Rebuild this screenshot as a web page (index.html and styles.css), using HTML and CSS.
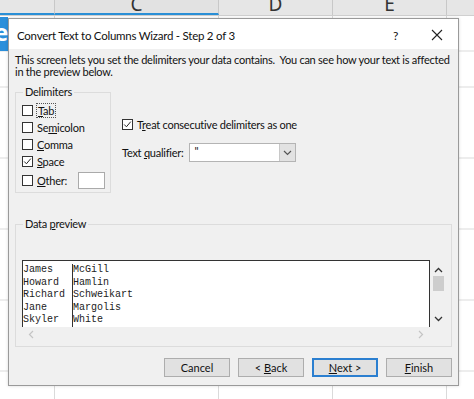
FILE: index.html
```html
<!DOCTYPE html>
<html lang="en">

<head>
    <meta charset="UTF-8">
    <title>Convert Text to Columns Wizard</title>
    <link rel="stylesheet" href="styles.css">
</head>

<body>
    <div class="sheet">
        <div class="col-head">
            <div class="hcell hcell-a"></div>
            <div class="hcell hcell-c selected">C</div>
            <div class="hcell hcell-d">D</div>
            <div class="hcell hcell-e">E</div>
            <div class="hcell hcell-f"></div>
        </div>
        <div class="cells">
            <div class="cell-col cell-a"><div class="tab-blue">e</div></div>
            <div class="cell-col cell-c"></div>
            <div class="cell-col cell-d"></div>
            <div class="cell-col cell-e"></div>
            <div class="cell-col cell-f"></div>
        </div>

        <div class="dialog">
            <div class="titlebar">
                <span class="title">Convert Text to Columns Wizard - Step 2 of 3</span>
                <span class="help">?</span>
                <svg class="close" width="12" height="12" viewBox="0 0 12 12">
                    <path d="M1 1 L11 11 M11 1 L1 11" stroke="#222" stroke-width="1.1" fill="none" />
                </svg>
            </div>

            <div class="body">
                <p class="intro">This screen lets you set the delimiters your data contains.&nbsp; You can see how your text is affected in the preview below.</p>

                <div class="options">
                    <fieldset class="group delimiters">
                        <legend>Delimiters</legend>
                        <label class="check"><span class="box"></span><span class="focus"><u>T</u>ab</span></label>
                        <label class="check"><span class="box"></span><span>Se<u>m</u>icolon</span></label>
                        <label class="check"><span class="box"></span><span><u>C</u>omma</span></label>
                        <label class="check"><span class="box checked"><svg width="11" height="11" viewBox="0 0 11 11"><path d="M1.5 5.5 L4.2 8.3 L9.5 2" stroke="#222" stroke-width="1.2" fill="none" /></svg></span><span><u>S</u>pace</span></label>
                        <label class="check other"><span class="box"></span><span><u>O</u>ther:</span><span class="other-input"></span></label>
                    </fieldset>

                    <div class="side">
                        <label class="check"><span class="box checked"><svg width="11" height="11" viewBox="0 0 11 11"><path d="M1.5 5.5 L4.2 8.3 L9.5 2" stroke="#222" stroke-width="1.2" fill="none" /></svg></span><span>T<u>r</u>eat consecutive delimiters as one</span></label>
                        <div class="qualifier">
                            <span>Text <u>q</u>ualifier:</span>
                            <div class="combo">
                                <span class="combo-value">"</span>
                                <span class="combo-btn"><svg width="9" height="6" viewBox="0 0 9 6"><path d="M1 1 L4.5 4.5 L8 1" stroke="#555" stroke-width="1.2" fill="none" /></svg></span>
                            </div>
                        </div>
                    </div>
                </div>

                <fieldset class="group preview-group">
                    <legend>Data <u>p</u>review</legend>
                    <div class="preview">
                        <div class="preview-main">
                            <div class="data">
                                <div class="data-col first">James<br>Howard<br>Richard<br>Jane<br>Skyler</div>
                                <div class="data-col">McGill<br>Hamlin<br>Schweikart<br>Margolis<br>White</div>
                            </div>
                            <div class="vscroll">
                                <svg width="9" height="6" viewBox="0 0 9 6"><path d="M1 5 L4.5 1.5 L8 5" stroke="#333" stroke-width="1.3" fill="none" /></svg>
                                <span class="thumb"></span>
                                <span class="vspace"></span>
                                <svg width="9" height="6" viewBox="0 0 9 6"><path d="M1 1 L4.5 4.5 L8 1" stroke="#333" stroke-width="1.3" fill="none" /></svg>
                            </div>
                        </div>
                        <div class="hscroll">
                            <svg width="6" height="9" viewBox="0 0 6 9"><path d="M5 1 L1.5 4.5 L5 8" stroke="#c4c4c4" stroke-width="1.2" fill="none" /></svg>
                            <svg width="6" height="9" viewBox="0 0 6 9"><path d="M1 1 L4.5 4.5 L1 8" stroke="#c4c4c4" stroke-width="1.2" fill="none" /></svg>
                        </div>
                    </div>
                </fieldset>

                <div class="buttons">
                    <button>Cancel</button>
                    <button>&lt; <u>B</u>ack</button>
                    <button class="default"><u>N</u>ext &gt;</button>
                    <button><u>F</u>inish</button>
                </div>
            </div>
        </div>
    </div>
</body>

</html>
```

FILE: styles.css
```css
body {
    margin: 0;
    font-family: Lato, "Noto Sans", sans-serif;
    font-size: 11px;
    letter-spacing: -0.25px;
    color: #111;
}

.sheet {
    position: relative;
    width: 474px;
    height: 399px;
    overflow: hidden;
    background: #fff;
}

/* column header strip */
.col-head {
    display: flex;
    height: 16px;
    background: #e6e6e6;
    border-bottom: 1px solid #d0d0d0;
    box-sizing: border-box;
}

.hcell {
    box-sizing: border-box;
    border-right: 1px solid #c8c8c8;
    text-align: center;
    font-family: "Noto Sans", sans-serif;
    font-size: 19px;
    letter-spacing: 0;
    line-height: 8px;
    overflow: hidden;
    color: #333;
}

.hcell-a { width: 55px; border-bottom: 2px solid #2a8fd6; }
.hcell-c { width: 164px; border-bottom: 2px solid #2a8fd6; background: #e2e2e2; }
.hcell-d { width: 114px; }
.hcell-e { width: 114px; }
.hcell-f { flex: 1; border-right: 0; }

.cells {
    display: flex;
    height: 383px;
}

.cell-col {
    box-sizing: border-box;
    border-right: 1px solid #dadada;
    background-image: repeating-linear-gradient(to bottom, transparent 0, transparent 34.5px, #dadada 34.5px, #dadada 35.5px);
    background-position: 0 0.5px;
}

.cell-a { width: 55px; }
.cell-c { width: 164px; }
.cell-d { width: 114px; }
.cell-e { width: 114px; }
.cell-f { flex: 1; border-right: 0; }

.tab-blue {
    width: 8px;
    height: 34px;
    margin-top: 1px;
    background: #2b8fdb;
    color: #fff;
    font-family: "Noto Sans", sans-serif;
    font-size: 24px;
    font-weight: bold;
    line-height: 30px;
    text-indent: -6px;
    overflow: hidden;
}

/* the wizard window */
.dialog {
    position: absolute;
    left: 8px;
    top: 18px;
    width: 451px;
    height: 368px;
    box-sizing: border-box;
    border: 1px solid #9a9a9a;
    background: #f0f0f0;
    display: flex;
    flex-direction: column;
    box-shadow: 0 0 3px rgba(0, 0, 0, 0.15);
}

.titlebar {
    display: flex;
    align-items: center;
    height: 28px;
    padding-left: 8px;
    padding-top: 2px;
    background: #fff;
}

.title {
    flex: 1;
    font-size: 11.5px;
}

.help {
    width: 14px;
    margin-right: 24px;
    font-size: 12px;
}

.close {
    margin-right: 15px;
}

.body {
    flex: 1;
    display: flex;
    flex-direction: column;
    padding: 5px 6px 0 6px;
}

.intro {
    margin: 0 -2px 0 0;
    line-height: 12px;
}

.options {
    display: flex;
    margin-top: 8px;
}

.group {
    margin: 0;
    border: 1px solid #dcdcdc;
    border-radius: 0;
}

.group legend {
    padding: 0 2px;
    margin-left: 1px;
    line-height: 12px;
}

.delimiters {
    width: 96px;
    box-sizing: border-box;
    height: 107px;
    padding: 6px 0 0 6px;
    display: flex;
    flex-direction: column;
    gap: 5px;
}

.check {
    display: flex;
    align-items: center;
    gap: 4px;
    height: 12px;
    white-space: nowrap;
}

.box {
    width: 11px;
    height: 11px;
    flex: none;
    box-sizing: border-box;
    border: 1px solid #333;
    background: #fff;
    display: flex;
    align-items: center;
    justify-content: center;
}

.focus {
    outline: 1px dotted #555;
    outline-offset: 0;
    padding: 0 1px;
}

.other {
    height: 17px;
}

.other-input {
    width: 27px;
    height: 17px;
    box-sizing: border-box;
    border: 1px solid #aaa;
    background: #fff;
    margin-left: 7px;
}

.side {
    display: flex;
    flex-direction: column;
    padding: 32px 0 0 11px;
    gap: 13px;
}

.qualifier {
    display: flex;
    align-items: center;
    gap: 6px;
}

.combo {
    display: flex;
    width: 107px;
    height: 19px;
    box-sizing: border-box;
    border: 1px solid #b4b4b4;
    background: #fff;
}

.combo-value {
    flex: 1;
    padding-left: 4px;
    line-height: 14px;
}

.combo-btn {
    width: 15px;
    background: #e2e2e2;
    border-left: 1px solid #c8c8c8;
    display: flex;
    align-items: center;
    justify-content: center;
}

.preview-group {
    margin-top: 25px;
    height: 129px;
    box-sizing: border-box;
    padding: 30px 4px 0 6px;
}

.preview {
    display: flex;
    flex-direction: column;
}

.preview-main {
    display: flex;
    height: 67px;
}

.data {
    flex: 1;
    display: flex;
    background: #fff;
    border: 1px solid #333;
    border-bottom: 0;
    padding-top: 3px;
    font-family: "Liberation Mono", "Courier New", monospace;
    font-size: 10px;
    letter-spacing: 0;
    line-height: 12.5px;
    color: #222;
    overflow: hidden;
}

.data-col.first {
    width: 49px;
    border-right: 1px solid #333;
}

.vscroll {
    width: 17px;
    display: flex;
    flex-direction: column;
    align-items: center;
    padding-top: 7px;
}

.thumb {
    width: 11px;
    height: 15px;
    margin-top: 3px;
    background: #cdcdcd;
}

.vspace {
    flex: 1;
}

.vscroll svg:last-child {
    margin-bottom: 5px;
}

.hscroll {
    display: flex;
    justify-content: space-between;
    padding: 3px 23px 0 6px;
    height: 14px;
    box-sizing: border-box;
}

.buttons {
    display: flex;
    justify-content: flex-end;
    gap: 8px;
    margin-top: 11px;
}

button {
    width: 66px;
    height: 19px;
    box-sizing: border-box;
    border: 1px solid #adadad;
    background: #e1e1e1;
    font-family: Lato, "Noto Sans", sans-serif;
    font-size: 11px;
    color: #111;
    padding: 0;
}

button.default {
    border: 2px solid #2b7fd0;
}
```
